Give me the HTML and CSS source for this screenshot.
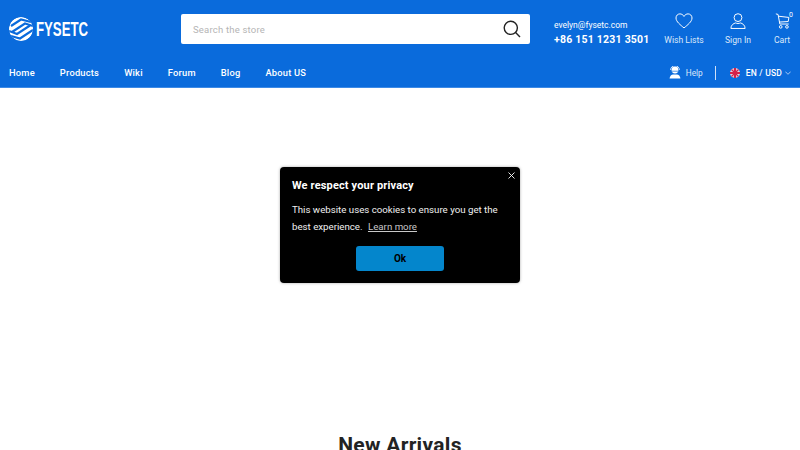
FILE: index.html
```html
<!DOCTYPE html>
<html>
<head>
    <link rel="stylesheet" href="styles.css">
</head>
<body>
    <header class="header">
        <div class="top-row">
            <a class="logo">
                <svg class="logo-mark" width="24" height="24" viewBox="0 0 24 24">
                    <defs>
                        <clipPath id="logo-clip"><circle cx="12" cy="12" r="12"/></clipPath>
                    </defs>
                    <g clip-path="url(#logo-clip)">
                        <circle cx="12" cy="12" r="12" fill="#fff"/>
                        <g stroke="#0a6bdc" stroke-width="2.1" fill="none">
                            <path d="M2 9 L12 2.5 L22 5"/>
                            <path d="M3 15 L16 6.5 L24 9"/>
                            <path d="M0 14 L8 17 L21 8.5"/>
                            <path d="M2 19 L11 21.5 L24 13"/>
                        </g>
                    </g>
                </svg>
                <span class="logo-text">FYSETC</span>
            </a>
            <div class="search">
                <span class="search-text">Search the store</span>
                <svg width="18" height="18" viewBox="0 0 18 18" fill="none" stroke="#222" stroke-width="1.4">
                    <circle cx="7.8" cy="7.8" r="6.6"/>
                    <path d="M12.6 12.6 L17 17"/>
                </svg>
            </div>
            <div class="contact">
                <div class="email">evelyn@fysetc.com</div>
                <div class="phone">+86 151 1231 3501</div>
            </div>
            <div class="actions">
                <a class="action action-wish">
                    <svg width="18" height="16" viewBox="0 0 20 18" fill="none" stroke="#fff" stroke-width="1.1">
                        <path d="M10 16.8 C6 13.4 1 9.8 1 5.6 C1 2.9 3 1 5.4 1 C7.3 1 9 2 10 3.9 C11 2 12.7 1 14.6 1 C17 1 19 2.9 19 5.6 C19 9.8 14 13.4 10 16.8 Z"/>
                    </svg>
                    <span>Wish Lists</span>
                </a>
                <a class="action action-sign">
                    <svg width="16" height="16" viewBox="0 0 18 18" fill="none" stroke="#fff" stroke-width="1.1">
                        <circle cx="9" cy="5.2" r="4.4"/>
                        <path d="M1 17.4 C1 13.6 4 11.6 6.4 11.2 C8 12 10 12 11.6 11.2 C14 11.6 17 13.6 17 17.4 Z"/>
                    </svg>
                    <span>Sign In</span>
                </a>
                <a class="action action-cart">
                    <svg width="15" height="16" viewBox="0 0 16 18" fill="none" stroke="#fff" stroke-width="1.1">
                        <path d="M0.5 1 L3 1.6 L5 12.4 L15 12.4"/>
                        <path d="M3.4 3.6 L15.2 5 L14.4 9.6 L4.3 10.2"/>
                        <circle cx="6" cy="15.6" r="1.5"/>
                        <circle cx="13" cy="15.6" r="1.5"/>
                    </svg>
                    <span>Cart</span>
                    <span class="cart-count">0</span>
                </a>
            </div>
        </div>
        <div class="nav-row">
            <nav class="nav">
                <a>Home</a>
                <a>Products</a>
                <a>Wiki</a>
                <a>Forum</a>
                <a>Blog</a>
                <a>About US</a>
            </nav>
            <div class="nav-right">
                <a class="help">
                    <svg width="12" height="13" viewBox="0 0 12 13" fill="#fff">
                        <circle cx="6" cy="4" r="3.4"/>
                        <path d="M1.6 4 A4.4 4.4 0 0 1 10.4 4" fill="none" stroke="#fff" stroke-width="0.8"/>
                        <path d="M3 5.2 H9" stroke="#0a6bdc" stroke-width="0.7"/>
                        <path d="M0.6 12.6 C0.6 9.8 2.6 8.6 4 8.4 L8 8.4 C9.4 8.6 11.4 9.8 11.4 12.6 Z"/>
                    </svg>
                    <span>Help</span>
                </a>
                <span class="divider"></span>
                <a class="lang">
                    <svg class="flag" width="10" height="10" viewBox="0 0 10 10">
                        <circle cx="5" cy="5" r="5" fill="#e3d5e0"/>
                        <path d="M0 5 H10 M5 0 V10" stroke="#d3224a" stroke-width="2.2"/>
                        <path d="M1.5 1.5 L8.5 8.5 M8.5 1.5 L1.5 8.5" stroke="#d3224a" stroke-width="1.2"/>
                    </svg>
                    <span>EN / USD</span>
                    <svg width="6" height="4" viewBox="0 0 6 4" fill="none" stroke="#cfe0f7" stroke-width="0.8">
                        <path d="M0.3 0.6 L3 3.3 L5.7 0.6"/>
                    </svg>
                </a>
            </div>
        </div>
    </header>

    <main class="content">
        <h2 class="section-title">New Arrivals</h2>
    </main>

    <div class="cookie-popup">
        <button class="cookie-close">
            <svg width="7" height="7" viewBox="0 0 7 7" stroke="#fff" stroke-width="0.9">
                <path d="M0.5 0.5 L6.5 6.5 M6.5 0.5 L0.5 6.5"/>
            </svg>
        </button>
        <h3 class="cookie-title">We respect your privacy</h3>
        <p class="cookie-text">This website uses cookies to ensure you get the best experience. <a class="cookie-link">Learn more</a></p>
        <button class="cookie-ok">Ok</button>
    </div>
</body>
</html>
```
FILE: styles.css
```css
html, body {
    height: 100%;
    overflow: hidden;
}

body {
    margin: 0;
    background-color: #fff;
    font-family: "Roboto", "Liberation Sans", sans-serif;
    color: #fff;
}

.header {
    box-sizing: border-box;
    height: 88px;
    background-color: #0a6bdc;
    border-bottom: 1px solid #3d8ae6;
}

.top-row {
    display: flex;
    align-items: center;
    height: 58px;
    padding-left: 9px;
}

.logo {
    display: flex;
    align-items: center;
    flex: none;
    width: 172px;
}

.logo-mark {
    flex: none;
}

.logo-text {
    margin-left: 3px;
    font-family: "Liberation Sans", sans-serif;
    font-size: 20px;
    font-weight: 700;
    transform: scaleX(0.66);
    transform-origin: left center;
}

.search {
    display: flex;
    align-items: center;
    justify-content: space-between;
    flex: none;
    box-sizing: border-box;
    width: 349px;
    height: 30px;
    padding: 0 9px 0 12px;
    background-color: #fff;
    border-radius: 2px;
}

.search-text {
    font-size: 9.5px;
    letter-spacing: 0.2px;
    color: #b5b5b5;
}

.contact {
    flex: none;
    width: 110px;
    margin-left: 24px;
    padding-top: 7px;
}

.email {
    font-size: 8.5px;
    line-height: 14px;
    margin-bottom: 1px;
}

.phone {
    font-size: 10.5px;
    font-weight: 700;
    letter-spacing: 0.22px;
    line-height: 14px;
    white-space: nowrap;
}

.actions {
    display: flex;
    flex: none;
}

.action {
    position: relative;
    display: flex;
    flex-direction: column;
    align-items: center;
    font-size: 8.6px;
    color: #dbe8fa;
    white-space: nowrap;
}

.action svg {
    margin-bottom: 6px;
}

.action-wish {
    width: 40px;
}

.action-sign {
    width: 40px;
    margin-left: 14px;
}

.action-cart {
    width: 24px;
    margin-left: 12px;
}

.cart-count {
    position: absolute;
    top: -2px;
    right: 1px;
    font-size: 7px;
    color: #fff;
}

.nav-row {
    display: flex;
    align-items: center;
    justify-content: space-between;
    height: 29px;
    padding: 0 9px;
}

.nav {
    display: flex;
    gap: 25px;
    font-size: 9.3px;
    font-weight: 500;
    letter-spacing: 0.22px;
}

.nav-right {
    display: flex;
    align-items: center;
}

.help {
    display: flex;
    align-items: center;
    gap: 5px;
    font-size: 8.3px;
    color: #dbe8fa;
}

.divider {
    width: 1px;
    height: 14px;
    margin: 0 14px 0 12px;
    background-color: #cfe0f7;
}

.lang {
    display: flex;
    align-items: center;
    font-size: 8.5px;
    font-weight: 500;
    letter-spacing: 0.2px;
}

.flag {
    margin-right: 6px;
}

.lang span {
    margin-right: 3px;
}

.content {
    text-align: center;
}

.section-title {
    margin: 343px 0 0;
    font-size: 21px;
    font-weight: 700;
    line-height: 28px;
    letter-spacing: 0.3px;
    color: #232323;
}

.cookie-popup {
    position: absolute;
    top: 167px;
    left: 280px;
    box-sizing: border-box;
    width: 240px;
    height: 116px;
    padding: 12px 12px 0;
    background-color: #000;
    border-radius: 4px;
    box-shadow: 0 0 3px rgba(0, 0, 0, 0.35);
    text-align: center;
}

.cookie-close {
    position: absolute;
    top: 5px;
    right: 5px;
    display: flex;
    padding: 0;
    border: none;
    background: none;
}

.cookie-title {
    margin: 0 0 8px;
    font-size: 11px;
    font-weight: 700;
    line-height: 14px;
    letter-spacing: 0.15px;
    text-align: left;
}

.cookie-text {
    margin: 0 0 11px;
    font-size: 9.7px;
    line-height: 17px;
    text-align: left;
    color: #f0f0f0;
}

.cookie-link {
    margin-left: 3px;
    color: #c8c8c8;
    text-decoration: underline;
}

.cookie-ok {
    width: 88px;
    height: 25px;
    padding: 0;
    border: none;
    border-radius: 3px;
    background-color: #0486cc;
    color: #000;
    font-family: inherit;
    font-size: 10px;
    font-weight: 700;
}
```
